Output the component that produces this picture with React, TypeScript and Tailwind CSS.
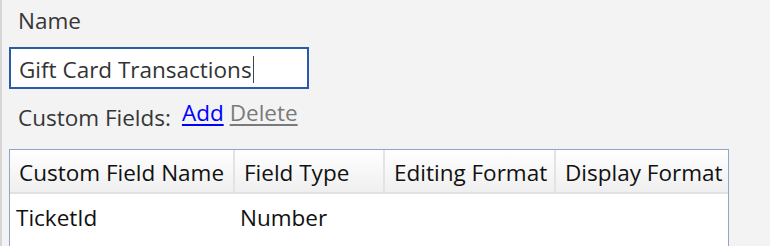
const font = { fontFamily: '"Open Sans", "Noto Sans", sans-serif' };

const columns = [
    { title: 'Custom Field Name', width: 'w-[225px]' },
    { title: 'Field Type', width: 'w-[150px]' },
    { title: 'Editing Format', width: 'w-[171px]' },
    { title: 'Display Format', width: 'flex-1' },
];

export default function App() {
    return (
        <div style={font} className="w-[770px] h-[246px] overflow-hidden bg-[#f3f3f3] border-l-2 border-[#d6d6d6] pl-[7px] text-[22.5px] leading-[30px] text-[#363636]">
            <div className="pl-[9px] pt-[6px] h-[47px]">Name</div>
            <div className="w-[300px] h-[42px] border-2 border-[#2b5ba6] bg-white pl-[8px] pt-[3px] flex items-center text-[#333]">
                <span>Gift Card Transactions</span>
                <span className="ml-[1px] w-px h-[27px] bg-[#444]" />
            </div>
            <div className="flex items-start gap-[11px] pl-[9px] pt-[9px] h-[60px]">
                <span className="pt-[5px]">Custom Fields:</span>
                <span className="flex gap-[6px]">
                    <span className="text-[#0000ff] underline underline-offset-[3px]">Add</span>
                    <span className="text-[#7a7a7a] underline underline-offset-[3px]">Delete</span>
                </span>
            </div>
            <div className="w-[720px] h-[120px] border border-[#8ea6c8] bg-white text-[#111]">
                <div className="flex h-[44px] bg-gradient-to-b from-white to-[#efefef] border-b-2 border-[#e1e1e1]">
                    {columns.map((c, i) => (
                        <div key={c.title} className={`${c.width} flex items-center pt-[4px] pl-[9px] ${i < columns.length - 1 ? 'border-r-2 border-[#e3e3e3]' : ''}`}>{c.title}</div>
                    ))}
                </div>
                <div className="flex h-[44px] items-center pt-[4px]">
                    <div className="w-[225px] pl-[6px]">TicketId</div>
                    <div className="w-[150px] pl-[5px]">Number</div>
                </div>
            </div>
        </div>
    );
}
